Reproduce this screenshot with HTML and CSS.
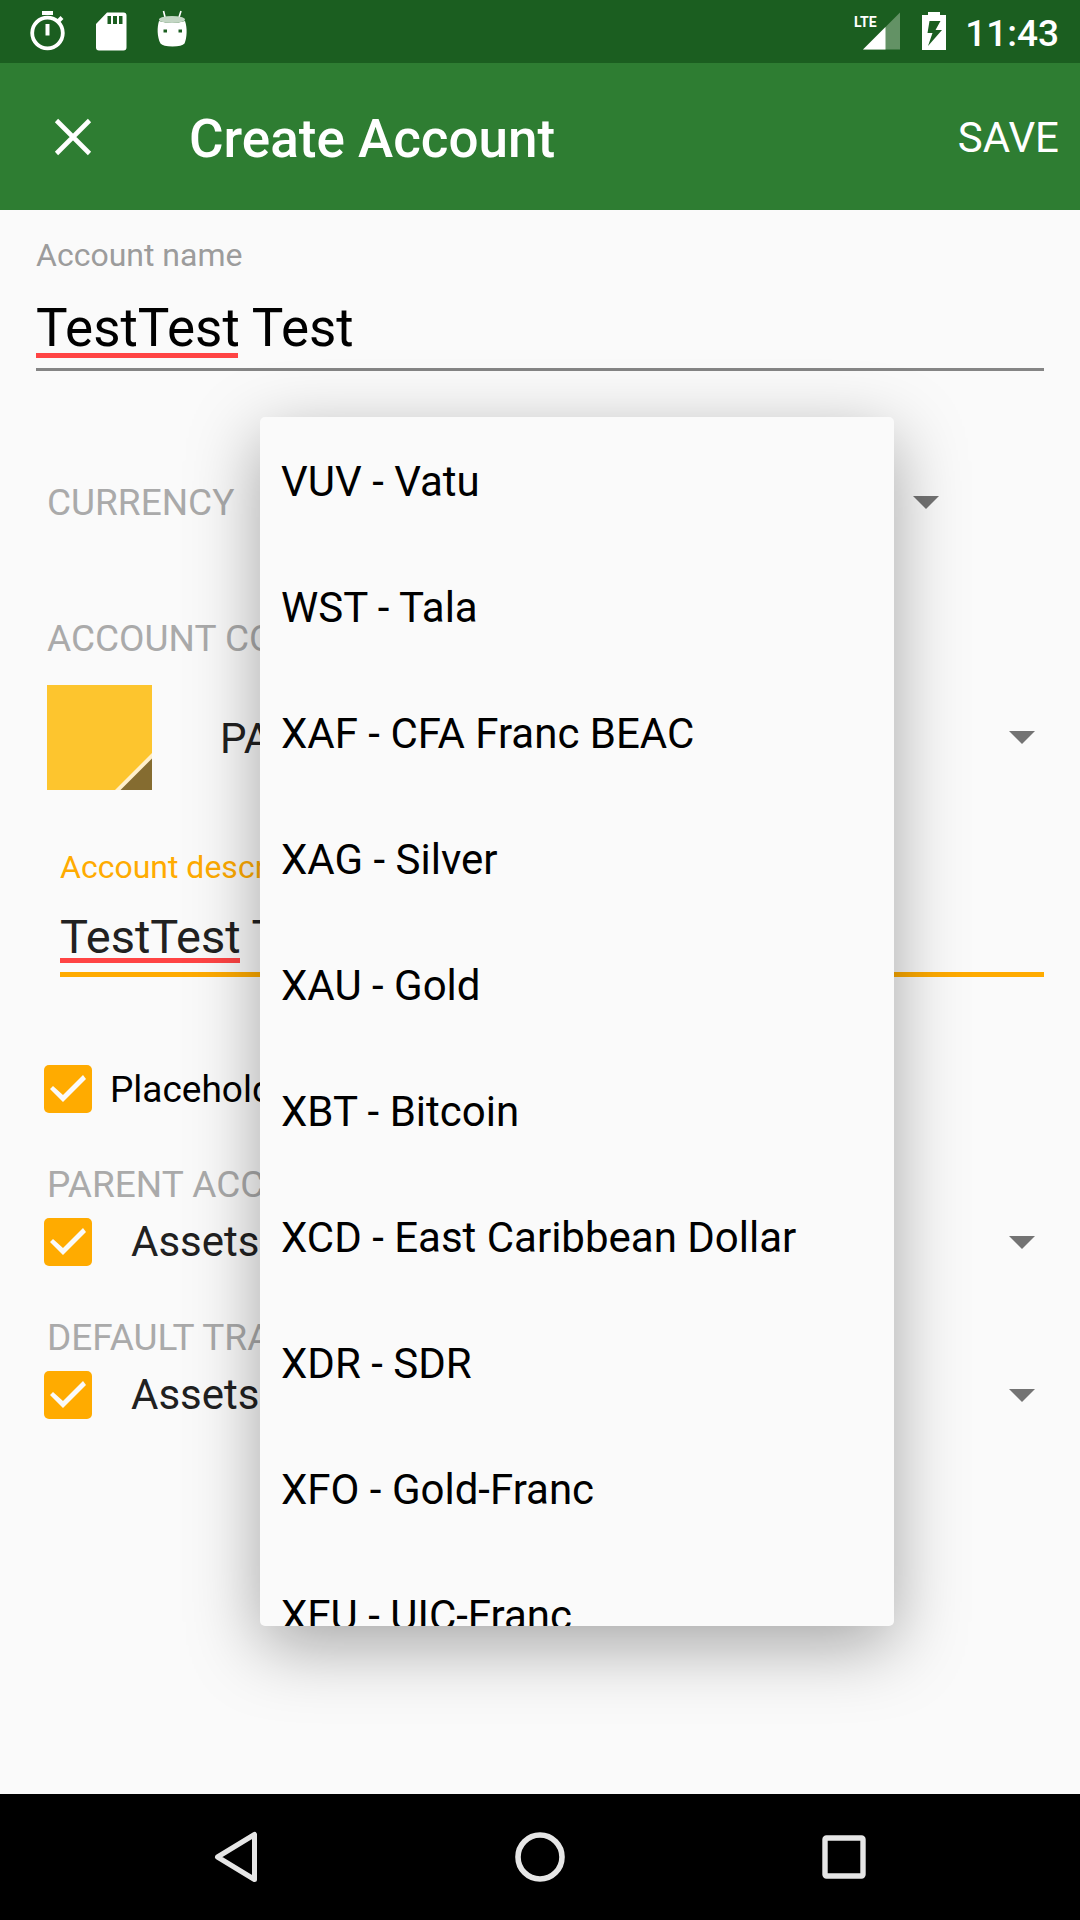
FILE: index.html
```html
<!DOCTYPE html>
<html lang="en">
<head>
<meta charset="utf-8">
<meta name="viewport" content="width=device-width, initial-scale=1">
<title>Create Account</title>
<link rel="stylesheet" href="styles.css">
</head>
<body>
<div class="status-bar">
  <div class="status-icons">
    <svg width="36" height="42" viewBox="0 0 36 42" aria-hidden="true">
      <path d="M12 1h11v4H12z" fill="#fff"/>
      <circle cx="17.500" cy="23" r="15.300" fill="none" stroke="#fff" stroke-width="3.800"/>
      <path d="M15.500 14h4v11.500h-4z" fill="#fff"/>
      <path d="M28 11.500l4-4" stroke="#fff" stroke-width="4"/>
    </svg>
    <svg width="32" height="42" viewBox="0 0 32 42" aria-hidden="true">
      <path fill="#fff" fill-rule="evenodd" d="M12 2.500h16.500a3 3 0 0 1 3 3v32a3 3 0 0 1-3 3H4a3 3 0 0 1-3-3V14zM12.500 6v8H16V6zM18 6v8h4V6zM24 6v8h3.500V6z"/>
    </svg>
    <svg width="32" height="42" viewBox="0 0 32 42" aria-hidden="true">
      <path d="M7.500 1l2 8M25 1l-2.500 8" stroke="#fff" stroke-width="1.600"/>
      <path fill="#fff" fill-rule="evenodd" d="M3 11Q16 15 29 11C31.500 18 31 28 28.500 33.500Q26 36.500 16.500 36.500T4.500 33.500C1 27 1 17 3 11zM7.500 19.500v3h3.500v-3zM22.500 19.500v3H26v-3z"/>
      <ellipse cx="16" cy="9.500" rx="13" ry="3.600" fill="#c3d6c4"/>
    </svg>
  </div>
  <div class="status-info">
    <svg class="signal" width="48" height="42" viewBox="0 0 48 42" aria-label="LTE signal">
      <path d="M47 2.500v37H10z" fill="#639265"/>
      <path d="M32.500 17v22.500H10z" fill="#fff"/>
      <text x="1" y="17">LTE</text>
    </svg>
    <svg width="26" height="42" viewBox="0 0 26 42" aria-hidden="true">
      <path fill="#fff" fill-rule="evenodd" d="M7 2h12v3h6v35H1V5h6zM8.500 11L6.500 23h5L7 36 21 20h-6.500L19.500 11z"/>
    </svg>
    <time class="clock">11:43</time>
  </div>
</div>

<header class="app-bar">
  <button class="close" type="button" aria-label="Close">
    <svg width="38" height="38" viewBox="0 0 38 38"><path d="M2.500 2.500l33 33M35.500 2.500l-33 33" stroke="#fff" stroke-width="4.600"/></svg>
  </button>
  <h1 class="title">Create Account</h1>
  <button class="save" type="submit" form="account-form">SAVE</button>
</header>

<main class="content">
  <form id="account-form" class="form">
    <div class="field">
      <label class="field-label" for="name">Account name</label>
      <input class="field-input field-input-large" id="name" type="text" value="TestTest Test" spellcheck="false">
      <span class="typo typo-large"></span>
    </div>

    <div class="currency-row">
      <label class="section-label currency-label" for="currency">CURRENCY</label>
      <div class="spinner">
        <select id="currency"><option>VUV - Vatu</option></select>
        <ul class="popup" role="listbox" aria-label="Currency">
          <li><button type="button" role="option">VUV - Vatu</button></li>
          <li><button type="button" role="option">WST - Tala</button></li>
          <li><button type="button" role="option">XAF - CFA Franc BEAC</button></li>
          <li><button type="button" role="option">XAG - Silver</button></li>
          <li><button type="button" role="option">XAU - Gold</button></li>
          <li><button type="button" role="option">XBT - Bitcoin</button></li>
          <li><button type="button" role="option">XCD - East Caribbean Dollar</button></li>
          <li><button type="button" role="option">XDR - SDR</button></li>
          <li><button type="button" role="option">XFO - Gold-Franc</button></li>
          <li><button type="button" role="option">XFU - UIC-Franc</button></li>
        </ul>
      </div>
    </div>

    <label class="section-label color-label" for="type">ACCOUNT COLOR &amp; TYPE</label>
    <div class="color-row">
      <button class="swatch" type="button" aria-label="Account color">
        <svg width="105" height="105" viewBox="0 0 105 105">
          <path d="M68 105L105 68v37z" fill="#fff0cb"/>
          <path d="M73.500 105L105 73.500V105z" fill="#856c30"/>
        </svg>
      </button>
      <div class="spinner">
        <select id="type"><option>PAYABLE</option></select>
      </div>
    </div>

    <div class="field field-active">
      <label class="field-label" for="description">Account description</label>
      <input class="field-input" id="description" type="text" value="TestTest Test" spellcheck="false">
      <span class="typo"></span>
    </div>

    <div class="check-row placeholder-row">
      <input class="check" id="placeholder" type="checkbox" checked>
      <label class="check-label" for="placeholder">Placeholder account</label>
    </div>

    <label class="section-label account-label" for="parent-on">PARENT ACCOUNT</label>
    <div class="check-row account-row">
      <input class="check" id="parent-on" type="checkbox" checked>
      <div class="spinner">
        <select aria-label="Parent account"><option>Assets</option></select>
      </div>
    </div>

    <label class="section-label account-label" for="transfer-on">DEFAULT TRANSFER ACCOUNT</label>
    <div class="check-row account-row">
      <input class="check" id="transfer-on" type="checkbox" checked>
      <div class="spinner">
        <select aria-label="Default transfer account"><option>Assets</option></select>
      </div>
    </div>
  </form>
</main>

<nav class="nav-bar" aria-label="System">
  <button type="button" aria-label="Back">
    <svg width="50" height="54" viewBox="0 0 50 54"><path d="M43.500 4.500v45L6.500 27z" fill="none" stroke="#e6e6e6" stroke-width="5" stroke-linejoin="round"/></svg>
  </button>
  <button type="button" aria-label="Home">
    <svg width="54" height="54" viewBox="0 0 54 54"><circle cx="27" cy="27" r="22" fill="none" stroke="#e6e6e6" stroke-width="5.600"/></svg>
  </button>
  <button type="button" aria-label="Recent apps">
    <svg width="54" height="54" viewBox="0 0 54 54"><rect x="8" y="8" width="38" height="38" rx="1.500" fill="none" stroke="#e6e6e6" stroke-width="5.400"/></svg>
  </button>
</nav>
</body>
</html>
```

FILE: styles.css
```css
* {
  box-sizing: border-box;
}

body {
  margin: 0;
  min-height: 100vh;
  display: flex;
  flex-direction: column;
  background: #fafafa;
  color: #000;
  font-family: Roboto, "Noto Sans", sans-serif;
}

button,
input,
select {
  font: inherit;
  color: inherit;
  margin: 0;
  padding: 0;
  border: 0;
  border-radius: 0;
  background: none;
}

svg {
  display: block;
}

/* Status bar */
.status-bar {
  height: 63px;
  padding: 0 21px 0 30px;
  display: flex;
  justify-content: space-between;
  background: #1b5e20;
  color: #fff;
}

.status-icons,
.status-info {
  display: flex;
  align-items: flex-start;
  padding-top: 10px;
}

.status-icons {
  gap: 29px;
}

.status-info {
  gap: 20px;
}

.signal text {
  fill: #fff;
  font-size: 14px;
  font-weight: 700;
}

.clock {
  margin-left: -2px;
  font-size: 37px;
  font-weight: 500;
  line-height: 48px;
}

/* App bar */
.app-bar {
  height: 147px;
  padding: 0 21px 0 54px;
  display: flex;
  align-items: center;
  background: #2e7d32;
  color: #fff;
}

.title {
  flex: 1;
  margin: 0 0 0 97px;
  padding-top: 4px;
  font-size: 53px;
  font-weight: 500;
  line-height: 60px;
}

.save {
  padding-top: 2px;
  font-size: 42px;
  line-height: 50px;
}

/* Form */
.content {
  flex: 1;
}

.form {
  padding: 26px 36px;
}

.field {
  position: relative;
}

.field-active {
  margin: 58px 0 0 24px;
}

.field-label {
  display: block;
  font-size: 32px;
  line-height: 38px;
  color: #9c9c9c;
}

.field-active .field-label {
  color: #ffab00;
}

.field-input {
  display: block;
  width: 100%;
  height: 91px;
  padding-top: 14px;
  border-bottom: 5px solid #ffab00;
  outline: 0;
  font-size: 47px;
  color: #212121;
}

.field-input-large {
  height: 97px;
  border-bottom: 3px solid #858585;
  font-size: 53px;
  color: #000;
}

/* Spelling mark under the first word */
.typo {
  position: absolute;
  left: 0;
  bottom: 14px;
  width: 180px;
  height: 5px;
  background: #ff4444;
}

.typo-large {
  bottom: 13px;
  width: 202px;
}

.section-label {
  display: block;
  padding: 2px 0 0 11px;
  font-size: 37px;
  line-height: 44px;
  color: #aaa;
}

.spinner {
  position: relative;
  flex: 1;
  display: flex;
  align-items: center;
}

.spinner::after {
  content: "";
  position: absolute;
  right: 9px;
  border: 13px solid transparent;
  border-top-color: #737373;
  border-bottom: 0;
  pointer-events: none;
}

.spinner select {
  appearance: none;
  width: 100%;
  font-size: 42px;
  line-height: 48px;
  color: #212121;
}

.currency-row {
  height: 84px;
  margin: 89px 96px 0 0;
  display: flex;
  align-items: center;
}

.currency-label {
  width: 224px;
}

.currency-row select {
  padding-left: 22px;
}

.color-label {
  margin-top: 71px;
}

.color-row {
  margin-top: 24px;
  padding-left: 11px;
  display: flex;
  gap: 68px;
}

.color-row select {
  padding-top: 2px;
}

.swatch {
  background: #fdc52e;
}

.check-row {
  height: 48px;
  padding-left: 8px;
  display: flex;
  align-items: center;
}

.placeholder-row {
  margin-top: 88px;
  gap: 18px;
}

.account-label {
  margin-top: 48px;
}

.account-row {
  margin-top: 11px;
  gap: 39px;
}

.check {
  appearance: none;
  width: 48px;
  height: 48px;
  border-radius: 5px;
  background: #ffab00;
}

.check:checked::before {
  content: "";
  display: block;
  width: 48px;
  height: 48px;
  background: #fafafa;
  clip-path: polygon(6px 24px, 19px 37px, 42px 14px, 39px 10px, 19px 30px, 9px 21px);
}

.check-label {
  padding-top: 2px;
  font-size: 37px;
  line-height: 44px;
}

/* Currency list */
.popup {
  position: absolute;
  z-index: 1;
  top: -61px;
  left: 0;
  width: 634px;
  height: 1209px;
  margin: 0;
  padding: 0;
  overflow: hidden;
  list-style: none;
  border-radius: 5px;
  background: #fafafa;
  box-shadow: 0 20px 70px rgba(0, 0, 0, .34);
}

.popup button {
  display: block;
  width: 100%;
  height: 126px;
  padding: 2px 21px 0;
  text-align: left;
  font-size: 42px;
}

/* Navigation bar */
.nav-bar {
  height: 126px;
  padding: 0 84px;
  display: flex;
  background: #000;
}

.nav-bar button {
  flex: 1;
  display: flex;
  align-items: center;
  justify-content: center;
}
```
